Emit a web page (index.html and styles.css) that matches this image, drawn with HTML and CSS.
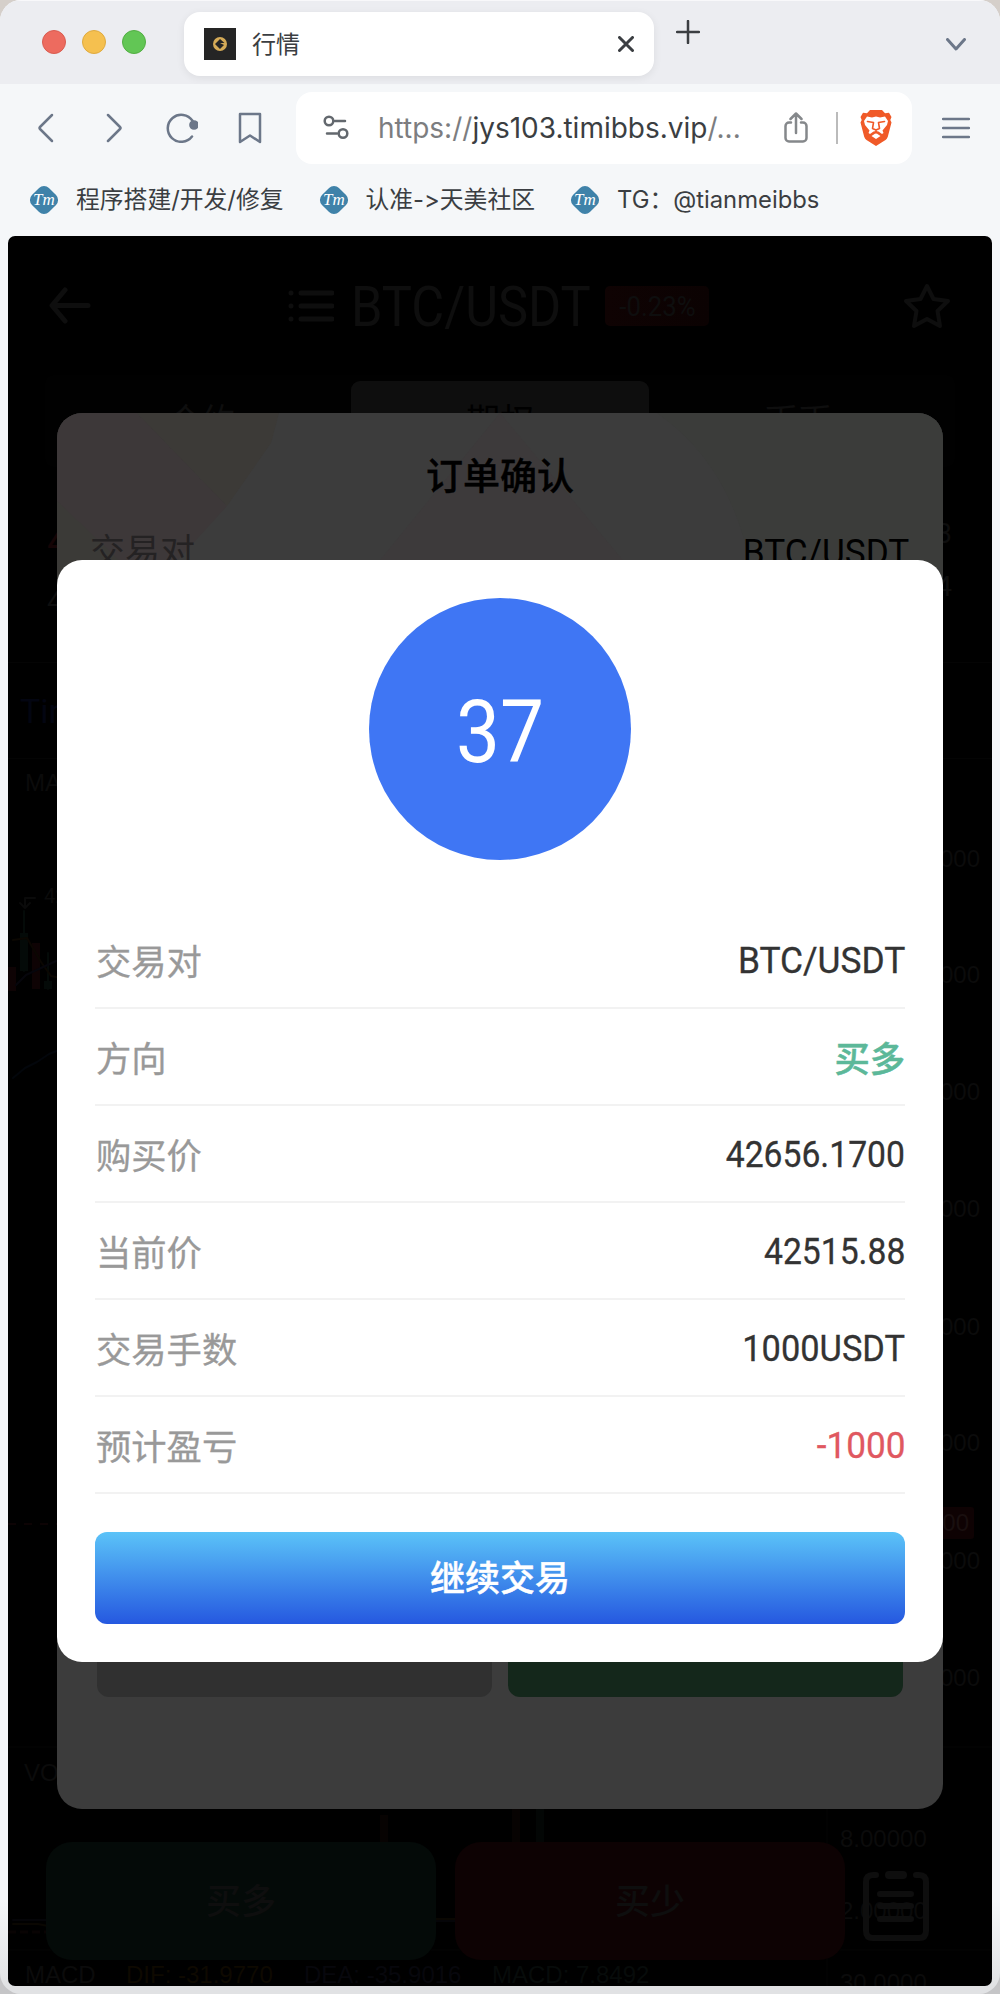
FILE: index.html
```html
<!DOCTYPE html>
<html lang="zh-CN">
<head>
  <meta charset="UTF-8">
  <meta name="viewport" content="width=device-width, initial-scale=1">
  <title>行情</title>
  <link rel="stylesheet" href="styles.css">
</head>
<body>

<div class="window">

  <div class="tab-strip">
    <div class="lights">
      <i class="light red"></i><i class="light yellow"></i><i class="light green"></i>
    </div>
    <div class="tab">
      <svg class="favicon" viewBox="0 0 32 32">
        <rect width="32" height="32" fill="#252525"/>
        <circle cx="16" cy="16" r="7" fill="#d5ab57"/>
        <path d="M16 11l4.500 4H16l4 2-4 4-5-5z" fill="#252525"/>
      </svg>
      <span class="tab-title">行情</span>
      <svg class="tab-close" viewBox="0 0 16 16"><path d="M1.5 1.5l13 13M14.5 1.5l-13 13"/></svg>
    </div>
    <svg class="new-tab" viewBox="0 0 24 24"><path d="M12 1v22M1 12h22"/></svg>
    <svg class="tab-menu" viewBox="0 0 20 13"><path d="M1.5 1.5L10 11l8.500-9.500"/></svg>
  </div>

  <div class="toolbar">
    <div class="nav">
      <svg width="16" height="30" viewBox="0 0 16 30"><path d="M14 2L2 14q-1 1 0 2l12 12"/></svg>
      <svg width="16" height="30" viewBox="0 0 16 30"><path d="M2 2l12 12q1 1 0 2L2 28"/></svg>
      <svg width="32" height="30" viewBox="0 0 32 30"><path d="M26.500 7.800A13.500 13.500 0 1 0 26 23.500"/><circle cx="28" cy="12" r="3.600" class="dot"/></svg>
      <svg width="24" height="32" viewBox="0 0 24 32"><path d="M2 2h20v28l-10-6.500L2 30z"/></svg>
    </div>
    <div class="address">
      <svg class="tune" viewBox="0 0 26 26"><circle cx="6" cy="6" r="4.300"/><path d="M12 6h10M4 18.500h10"/><circle cx="20" cy="18.500" r="4.300"/></svg>
      <span class="url"><span class="grey">https://</span>jys103.timibbs.vip<span class="grey">/...</span></span>
      <svg class="share" viewBox="0 0 24 32"><path d="M7 10.500H5a3.500 3.500 0 0 0-3.500 3.500v12A3.500 3.500 0 0 0 5 29.500h14a3.500 3.500 0 0 0 3.500-3.500V14a3.500 3.500 0 0 0-3.500-3.500h-2M12 21V2M6.500 7L12 1.500 17.500 7"/></svg>
      <i class="divider"></i>
      <svg class="shield" viewBox="0 0 32 36">
        <path d="M10 0h12l3 3.200 4-.4 2.500 4.200-1.200 3 1.200 2.500-3.700 14.300Q27 29 25.500 30L16 36l-9.500-6Q5 29 4.200 26.800L.5 12.500 1.700 10 .5 7 3 2.800l4 .4z" fill="#f05a28"/>
        <path d="M7 6.500l5 1 4-1 4 1 5-1 3 4.500-1 4-4.500 5.500 1 2.500-1.500 1-3.500-2.500-2.500-.5-2.500.5L10 24l-1.500-1 1-2.500L5 15l-1-4zM11.500 26l4.500-3 4.500 3-4.500 3z" fill="#fff"/>
        <path d="M7.500 11.500l6 1-1 6 3.500 1.500 3.500-1.500-1-6 6-1M16 20v3" fill="none" stroke="#f05a28" stroke-width="1.600"/>
      </svg>
    </div>
    <svg class="menu" viewBox="0 0 28 22"><path d="M1 2h26M1 11h26M1 20h26"/></svg>
  </div>

  <div class="bookmarks">
    <div class="bookmark"><span class="tm"><em>Tm</em></span>程序搭建/开发/修复</div>
    <div class="bookmark"><span class="tm"><em>Tm</em></span>认准-&gt;天美社区</div>
    <div class="bookmark"><span class="tm"><em>Tm</em></span>TG：@tianmeibbs</div>
  </div>

  <div class="page">
    <header class="pair-header">
      <svg class="back" viewBox="0 0 42 38"><path d="M16 3L3 18.500 16 34M5 18.500h34"/></svg>
      <div class="pair">
        <svg class="list" viewBox="0 0 46 32"><path d="M13 3h31M13 16h31M13 29h31"/><path d="M3 3h0M3 16h0M3 29h0"/></svg>
        <div class="pair-name"><span>BTC/USDT</span></div>
        <div class="change"><span>-0.23%</span></div>
      </div>
      <svg class="star" viewBox="0 0 48 46"><path d="M24 3l6.500 13L45 18 34.500 28 37 43 24 36 11 43l2.500-15L3 18l14.500-2z"/></svg>
    </header>

    <div class="market-tabs">
      <div>合约</div>
      <div class="active">期权</div>
      <div>币币</div>
    </div>

    <div class="quote">
      <div class="price">
        <b>4</b>
        <span>4</span>
      </div>
      <div class="range">
        <span>3</span>
        <span>4</span>
      </div>
    </div>

    <div class="period">Tin</div>

    <!-- candles, volume and MACD -->
    <svg class="chart" viewBox="8 759 984 1227">
      <path d="M8 1747h984M8 1950h984M827 759v1227" stroke="#050505" fill="none"/>
      <g class="axis">
        <text x="25" y="791">MA</text>
        <text x="24" y="1781">VO</text>
        <text x="980" y="867" text-anchor="end">000</text>
        <text x="980" y="983" text-anchor="end">000</text>
        <text x="980" y="1100" text-anchor="end">000</text>
        <text x="980" y="1217" text-anchor="end">000</text>
        <text x="980" y="1335" text-anchor="end">000</text>
        <text x="980" y="1451" text-anchor="end">000</text>
        <text x="980" y="1569" text-anchor="end">000</text>
        <text x="980" y="1686" text-anchor="end">000</text>
        <text x="840" y="1847">8.00000</text>
        <text x="840" y="1919">2.00000</text>
        <text x="840" y="1991">30.0000</text>
        <text x="25" y="1983">MACD</text>
        <text x="126" y="1983" class="dif">DIF: -31.9770</text>
        <text x="304" y="1983" class="dea">DEA: -35.9016</text>
        <text x="492" y="1983" class="macd">MACD: 7.8492</text>
      </g>
      <path d="M35 898h-10v9M20 903l5 5 5-5" stroke="#0a0a0a" stroke-width="2" fill="none"/>
      <text x="44" y="903" class="peak">42</text>
      <path d="M24 911v60M48 953v36" stroke="#040a08" stroke-width="2"/>
      <path d="M20 933h8v38h-8zM44 981h8v8h-8z" fill="#040a08"/>
      <path d="M8 967h8v24H8zM32 943h8v46h-8z" fill="#0e0304"/>
      <path d="M13 940l14-2 14 24 10 14 10 2" stroke="#0b0702" stroke-width="2" fill="none"/>
      <path d="M16 985l10-10 30-14" stroke="#06060c" stroke-width="2" fill="none"/>
      <path d="M13 1078l12-10 12-6 12-8 10-4" stroke="#03060b" stroke-width="2" fill="none"/>
      <path d="M8 1524h50" stroke="#0c0304" stroke-width="2" stroke-dasharray="8 8" stroke-linecap="butt"/>
      <rect x="834" y="1507" width="140" height="32" rx="3" fill="#0e0203"/>
      <text x="969" y="1531" text-anchor="end" class="last">00</text>
      <path d="M380 1815h8v40h-8zM512 1805h8v40h-8z" fill="#070302"/>
      <path d="M536 1805h8v40h-8z" fill="#030605"/>
      <path d="M13 1920h34M436 1921h20" stroke="#050508" stroke-width="2"/>
      <path d="M13 1924h25l10 2M436 1919h20" stroke="#0a0702" stroke-width="2" fill="none"/>
      <path d="M8 1932h40" stroke="#080303" stroke-width="3" stroke-dasharray="8 4" stroke-linecap="butt"/>
    </svg>

    <div class="actions">
      <div class="action up">买多</div>
      <div class="action down">买少</div>
      <svg class="orders" viewBox="0 0 66 70"><path d="M13 4H10Q3 4 3 11v49q0 7 7 7h46q7 0 7-7V11q0-7-7-7h-3"/><path d="M26 4h14" stroke-width="8"/><path d="M17 23h31M17 35h31M17 48h31"/></svg>
    </div>

    <div class="dialog confirm">
      <svg class="confirm-bg" viewBox="0 0 886 440" preserveAspectRatio="none">
        <path d="M0 0h80l90 93-50 55-60 32L0 88z" fill="#3d3839"/>
        <path d="M80 0h142l-8 30-44 63z" fill="#3c3a37"/>
        <path d="M0 88l105 100v60H0z" fill="#3b3a37"/>
        <path d="M443 0L280 200h330z" fill="#3d3a3b"/>
        <path d="M600 0h286v230H700Q700 70 600 0z" fill="#3b3c3a"/>
      </svg>
      <div class="confirm-title">订单确认</div>
      <div class="confirm-row"><span>交易对</span><b><span>BTC/USDT</span></b></div>
      <div class="confirm-buttons"><div>取消</div><div class="ok">确定</div></div>
    </div>

    <div class="dialog order">
      <div class="countdown"><span>37</span></div>
      <div class="rows">
        <div class="row"><span class="label">交易对</span><span class="value">BTC/USDT</span></div>
        <div class="row"><span class="label">方向</span><span class="value buy">买多</span></div>
        <div class="row"><span class="label">购买价</span><span class="value num">42656.1700</span></div>
        <div class="row"><span class="label">当前价</span><span class="value num">42515.88</span></div>
        <div class="row"><span class="label">交易手数</span><span class="value mixed">1000USDT</span></div>
        <div class="row"><span class="label">预计盈亏</span><span class="value num loss">-1000</span></div>
      </div>
      <div class="continue">继续交易</div>
    </div>
  </div>

</div>

</body>
</html>
```
FILE: styles.css
```css
* {
  box-sizing: border-box;
}

body {
  margin: 0;
  background: linear-gradient(#d5cfca, #c5c5c7);
  font-family: Roboto, "Noto Sans CJK SC", sans-serif;
}

svg {
  display: block;
  flex: none;
  fill: none;
  stroke-linecap: round;
  stroke-linejoin: round;
}

.window {
  height: 1994px;
  padding: 0 8px 8px;
  border-radius: 21px;
  overflow: hidden;
  background: linear-gradient(#f5f7f9 0, #f5f7f9 1900px, #e1e2e4 1986px);
}

/* browser chrome */

.tab-strip {
  display: flex;
  height: 84px;
  margin: 0 -8px;
  padding: 12px 34px 0 42px;
  background: #ecedf1;
  border-top: 1px solid #f8f8fa;
}

.lights {
  display: flex;
  gap: 16px;
  width: 142px;
  padding-top: 17px;
}

.light {
  width: 24px;
  height: 24px;
  border-radius: 50%;
}

.red {
  background: #ed6b5f;
  border: 1px solid #d95c50;
}

.yellow {
  background: #f5c04f;
  border: 1px solid #dfaa3f;
}

.green {
  background: #62c655;
  border: 1px solid #52ae43;
}

.tab {
  display: flex;
  align-items: center;
  width: 470px;
  height: 64px;
  margin-top: -1px;
  padding: 0 20px;
  border-radius: 16px;
  background: #fff;
  box-shadow: 0 2px 8px rgba(0, 0, 0, .07);
}

.favicon {
  width: 32px;
  height: 32px;
}

.tab-title {
  flex: 1;
  margin-left: 16px;
  padding-bottom: 4px;
  font-size: 24px;
  color: #3b3e42;
}

.tab-close {
  width: 16px;
  height: 16px;
  stroke: #3b3e42;
  stroke-width: 3;
}

.new-tab {
  width: 24px;
  height: 24px;
  margin: 7px 0 0 22px;
  stroke: #3b3e42;
  stroke-width: 2.5;
}

.tab-menu {
  width: 20px;
  height: 13px;
  margin: 25px 0 0 auto;
  stroke: #6c7789;
  stroke-width: 3;
}

.toolbar {
  display: flex;
  align-items: center;
  height: 88px;
  padding: 0 22px 0 30px;
  stroke: #6c7789;
  stroke-width: 2.5;
}

.nav {
  display: flex;
  align-items: center;
  width: 258px;
}

.nav svg:nth-child(2) {
  margin-left: 52px;
}

.nav svg:nth-child(3) {
  margin-left: 44px;
}

.nav svg:nth-child(4) {
  margin-left: 40px;
}

.dot {
  fill: #6c7789;
}

.address {
  display: flex;
  align-items: center;
  width: 616px;
  height: 72px;
  padding: 0 20px 0 27px;
  border-radius: 16px;
  background: #fff;
  stroke: #63686e;
}

.tune {
  width: 26px;
  height: 26px;
}

.url {
  width: 448px;
  margin-left: 29px;
  font-family: Inter, sans-serif;
  font-size: 28px;
  color: #3b3e42;
  white-space: nowrap;
}

.grey {
  color: #7c7d80;
}

.share {
  width: 24px;
  height: 32px;
  margin-left: -42px;
  stroke: #85888b;
}

.divider {
  width: 2px;
  height: 32px;
  margin: 0 22px 0 28px;
  background: #bbb;
}

.shield {
  width: 32px;
  height: 36px;
  stroke: none;
}

.menu {
  width: 28px;
  height: 22px;
  margin-left: auto;
}

.bookmarks {
  display: flex;
  align-items: center;
  gap: 34px;
  height: 64px;
  padding: 0 0 8px 20px;
  font-family: Inter, "Noto Sans CJK SC", sans-serif;
  font-size: 23.8px;
  line-height: 30px;
  font-feature-settings: "calt" 0;
  color: #3b3e42;
}

.bookmark {
  display: flex;
  align-items: center;
  white-space: nowrap;
}

.tm {
  display: flex;
  justify-content: center;
  align-items: center;
  width: 24px;
  height: 24px;
  margin: 0 20px 0 4px;
  border-radius: 7px;
  background: #3f82a9;
  transform: rotate(45deg);
}

.tm em {
  font: italic 17px "Liberation Serif", serif;
  color: #fff;
  transform: rotate(-45deg);
}

/* trading page, dimmed behind the dialogs */

.page {
  position: relative;
  display: flex;
  flex-direction: column;
  height: 1750px;
  border-radius: 7px;
  overflow: hidden;
  background: #000;
  color: #0e0e0e;
}

.pair-header {
  display: flex;
  align-items: center;
  justify-content: space-between;
  height: 139px;
  padding: 0 41px;
  stroke: #0e0e0e;
}

.back {
  width: 42px;
  height: 38px;
  stroke-width: 5;
}

.pair {
  display: flex;
  align-items: center;
  margin-left: 3px;
}

.list {
  width: 46px;
  height: 32px;
  margin-right: 17px;
  stroke-width: 5;
}

.pair-name {
  width: 254px;
  padding-top: 2px;
  font-size: 55px;
  white-space: nowrap;
}

.pair-name span,
.countdown span {
  display: inline-block;
  transform: scaleX(.92);
  transform-origin: left;
}

.change {
  width: 104px;
  height: 40px;
  border-radius: 5px;
  background: linear-gradient(90deg, #0f0303, #0b0202);
  font-size: 28px;
  line-height: 42px;
  text-align: center;
}

.change span {
  display: inline-block;
  transform: scaleX(.92);
}

.star {
  width: 48px;
  height: 46px;
  stroke-width: 4;
}

.market-tabs {
  display: grid;
  grid-template-columns: repeat(3, 1fr);
  height: 92px;
  margin: 0 37px;
  padding: 6px 8px;
  border-radius: 8px;
  background: #010101;
  font-size: 34px;
  line-height: 80px;
  text-align: center;
}

.market-tabs .active {
  border-radius: 9px;
  background: #0e0e0e;
  color: #000;
}

.quote {
  display: flex;
  justify-content: space-between;
  height: 196px;
  padding: 40px 40px 0 39px;
  border-bottom: 1px solid #040404;
  font-size: 28px;
}

.quote b,
.quote span {
  display: block;
}

.price {
  padding-top: 5px;
  line-height: 60px;
}

.price b {
  font-size: 40px;
  font-weight: 400;
  color: #140405;
}

.range {
  line-height: 53px;
}

.period {
  height: 96px;
  padding-left: 12px;
  border-bottom: 1px solid #040404;
  font-size: 34px;
  line-height: 97px;
  color: #030511;
}

.chart {
  width: 984px;
  height: 1227px;
}

.axis,
.last {
  font-family: "Liberation Sans", sans-serif;
  font-size: 24px;
  fill: #0b0b0b;
}

.last {
  fill: #190f0f;
}

.axis .dif {
  fill: #0e0900;
}

.axis .dea {
  fill: #07070c;
}

.axis .macd {
  fill: #070b0a;
}

.peak {
  font-size: 20px;
  fill: #0b0b0b;
}

.actions {
  position: absolute;
  left: 38px;
  bottom: 26px;
  display: flex;
  align-items: center;
}

.action {
  width: 390px;
  height: 118px;
  margin-right: 19px;
  border-radius: 26px;
  font-size: 35px;
  font-weight: 500;
  line-height: 122px;
  text-align: center;
}

.up {
  background: #040a08;
}

.down {
  background: #0d0203;
}

.orders {
  width: 66px;
  height: 70px;
  margin: 10px 0 0 -1px;
  stroke: #0e0e0e;
  stroke-width: 6;
}

/* dialogs */

.dialog {
  position: absolute;
  left: 49px;
  width: 886px;
  border-radius: 25px;
  overflow: hidden;
}

.confirm {
  top: 177px;
  height: 1396px;
  padding: 0 38px;
  background: #3c3c3c;
  color: #000;
}

.confirm-bg {
  position: absolute;
  left: 0;
  top: 0;
  width: 886px;
  height: 440px;
}

.confirm-title {
  position: relative;
  height: 97px;
  padding-top: 12px;
  font-size: 37px;
  font-weight: 500;
  line-height: 106px;
  text-align: center;
  -webkit-text-stroke: .4px;
}

.confirm-row {
  position: relative;
  display: flex;
  justify-content: space-between;
  height: 1096px;
  margin: 0 -4px 0 -5px;
  padding-top: 16px;
  font-size: 35px;
  line-height: 54px;
}

.confirm-row > span {
  color: #242223;
}

.confirm-row b {
  font-size: 37px;
  font-weight: 400;
}

.confirm-row b span {
  display: inline-block;
  transform: scaleX(.95);
  transform-origin: right;
}

.confirm-buttons {
  display: flex;
  gap: 16px;
  margin: 0 2px;
}

.confirm-buttons div {
  flex: 1;
  height: 91px;
  border-radius: 12px;
  background: #303030;
  font-size: 34px;
  line-height: 74px;
  text-align: center;
}

.confirm-buttons .ok {
  background: #14271b;
  color: #3c3c3c;
}

.order {
  top: 324px;
  height: 1102px;
  padding: 38px;
  background: #fff;
}

.countdown {
  width: 262px;
  height: 262px;
  margin: 0 auto;
  border-radius: 50%;
  background: #3f76f4;
  color: #fff;
  font-size: 87px;
  line-height: 268px;
  text-align: center;
}

.countdown span {
  transform: scaleX(.9);
  transform-origin: center;
}

.rows {
  margin-top: 52px;
}

.row {
  display: flex;
  justify-content: space-between;
  align-items: center;
  height: 97px;
  border-bottom: 2px solid #f2f2f2;
}

.label {
  padding-left: 1px;
  font-size: 35.3px;
  color: #999;
  -webkit-text-stroke: .3px;
}

.value {
  padding-top: 2px;
  font-size: 37px;
  color: #333;
  transform: scaleX(.955);
  transform-origin: right;
  -webkit-text-stroke: .3px;
}

.num {
  transform: scaleX(.91);
}

.mixed {
  transform: scaleX(.93);
}

.buy {
  padding: 0 0 0 0;
  font-size: 35.3px;
  font-weight: 500;
  color: #5cb899;
  transform: none;
  -webkit-text-stroke: .5px;
}

.loss {
  color: #e05860;
  transform: scaleX(.95);
}

.continue {
  height: 92px;
  margin-top: 38px;
  border-radius: 12px;
  background: linear-gradient(#5bc3f8, #2558e0);
  color: #fff;
  font-size: 35px;
  font-weight: 500;
  line-height: 96px;
  text-align: center;
  -webkit-text-stroke: .4px;
}
```
